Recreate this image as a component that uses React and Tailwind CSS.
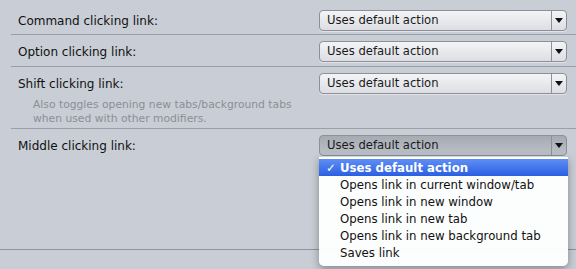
import React from "react";

const font = { fontFamily: '"DejaVu Sans", "Lucida Grande", sans-serif' };

// popup-knop zoals op de Mac voorkeurenpagina
const PopupButton = ({ open = false }) => (
  <div
    className={
      "flex h-[21px] w-[248px] items-stretch rounded-[4px] border border-[#8c9099] shadow-[0_1px_0_rgba(255,255,255,0.45)] " +
      (open
        ? "bg-gradient-to-b from-[#a6aab3] to-[#bcc0c8]"
        : "bg-gradient-to-b from-[#f3f4f6] to-[#dcdee3]")
    }
  >
    <div className="flex flex-1 items-center pl-[7px] pt-[1px] text-[11.6px] leading-none text-[#1a1a1a]">
      Uses default action
    </div>
    <div className="flex w-[15px] items-center justify-center border-l border-[#8c9099]">
      <svg width="8" height="5" viewBox="0 0 8 5">
        <path d="M0 0 H8 L4 5 Z" fill="#111" />
      </svg>
    </div>
  </div>
);

const items = [
  "Uses default action",
  "Opens link in current window/tab",
  "Opens link in new window",
  "Opens link in new tab",
  "Opens link in new background tab",
  "Saves link",
];

export default function App() {
  return (
    <div
      className="relative h-[269px] w-[576px] overflow-hidden bg-[#c9cdd5]"
      style={font}
    >
      {/* command */}
      <div className="pt-[10px]">
        <div className="ml-[11px] h-[25px] border-b border-[#9b9fa8] pl-[7px] pr-[9px]">
          <div className="flex items-center justify-between">
            <span className="pt-[1px] text-[12px] text-[#111]">Command clicking link:</span>
            <PopupButton />
          </div>
        </div>
      </div>
      {/* option */}
      <div className="pt-[6px]">
        <div className="ml-[11px] h-[26px] border-b border-[#9b9fa8] pl-[7px] pr-[9px]">
          <div className="flex items-center justify-between">
            <span className="pt-[1px] text-[12px] text-[#111]">Option clicking link:</span>
            <PopupButton />
          </div>
        </div>
      </div>
      {/* shift */}
      <div className="ml-[11px] h-[62px] border-b border-[#9b9fa8] pt-[6px] pl-[7px] pr-[9px]">
        <div className="flex items-center justify-between">
          <span className="pt-[1px] text-[12px] text-[#111]">Shift clicking link:</span>
          <PopupButton />
        </div>
        <div className="mt-[4px] pl-[15px] text-[10.75px] leading-[14px] text-[#8b8f97]">
          Also toggles opening new tabs/background tabs
          <br />
          when used with other modifiers.
        </div>
      </div>
      {/* middle, met open menu */}
      <div className="h-[121px] border-b border-[#8f939c] pt-[6px]">
        <div className="ml-[11px] pl-[7px] pr-[9px]">
          <div className="flex items-center justify-between">
            <span className="pt-[1px] text-[12px] text-[#111]">Middle clicking link:</span>
            <div className="relative">
              <PopupButton open />
              <div className="absolute left-0 top-[22px] z-10 w-[249px] rounded-b-[5px] bg-white/95 pt-[2px] pb-[5px] shadow-[0_3px_8px_rgba(0,0,0,0.35)]">
                {items.map((item, i) => (
                  <div
                    key={item}
                    className={
                      "flex h-[17px] items-center pt-[2px] text-[11.75px] " +
                      (i === 0
                        ? "bg-gradient-to-b from-[#5f8ef3] to-[#2b5fe3] font-semibold text-white"
                        : "text-[#111]")
                    }
                  >
                    <span className="w-[21px] pl-[7px] font-bold">{i === 0 ? "✓" : ""}</span>
                    {item}
                  </div>
                ))}
              </div>
            </div>
          </div>
        </div>
      </div>
    </div>
  );
}
